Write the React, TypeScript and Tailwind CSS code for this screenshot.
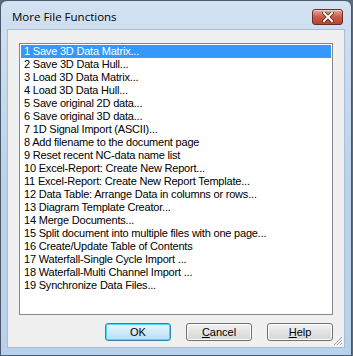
import React from 'react';

const items = [
  '1 Save 3D Data Matrix...',
  '2 Save 3D Data Hull...',
  '3 Load 3D Data Matrix...',
  '4 Load 3D Data Hull...',
  '5 Save original 2D data...',
  '6 Save original 3D data...',
  '7 1D Signal Import (ASCII)...',
  '8 Add filename to the document page',
  '9 Reset recent NC-data name list',
  '10 Excel-Report: Create New Report...',
  '11 Excel-Report: Create New Report Template...',
  '12 Data Table: Arrange Data in columns or rows...',
  '13 Diagram Template Creator...',
  '14 Merge Documents...',
  '15 Split document into multiple files with one page...',
  '16 Create/Update Table of Contents',
  '17 Waterfall-Single Cycle Import ...',
  '18 Waterfall-Multi Channel Import ...',
  '19 Synchronize Data Files...',
];

function CloseButton() {
  return (
    <div className="w-[31px] h-[16px] rounded-[3px] border border-[#6d2a26] bg-gradient-to-b from-[#e4a79b] via-[#c85a4a] to-[#b8442f] flex items-center justify-center shadow-[inset_0_1px_0_rgba(255,255,255,0.5)]">
      <svg width="12" height="10" viewBox="0 0 12 10">
        <path d="M2 1 L10 9 M10 1 L2 9" stroke="#4a2320" strokeWidth="3.6" strokeLinecap="square" />
        <path d="M2 1 L10 9 M10 1 L2 9" stroke="#ffffff" strokeWidth="2" strokeLinecap="square" />
      </svg>
    </div>
  );
}

function DlgButton({ children, primary }: { children: React.ReactNode; primary?: boolean }) {
  return (
    <button
      className={`w-[66px] h-[18px] rounded-[3px] border text-[11px] leading-none text-black flex items-center justify-center font-['Liberation_Sans',Arial,sans-serif] ${
        primary
          ? 'border-[#3c7fb1] bg-gradient-to-b from-[#eaf6fd] to-[#b6defa] shadow-[inset_0_0_0_1px_#48d8fb]'
          : 'border-[#707070] bg-gradient-to-b from-[#f2f2f2] to-[#d5d5d5] shadow-[inset_0_0_0_1px_#fcfcfc]'
      }`}
    >
      {children}
    </button>
  );
}

export default function App() {
  return (
    <div className="w-[353px] h-[356px] bg-[#5b6b7a] overflow-hidden">
      <div className="w-[352px] h-[356px] rounded-t-[7px] border border-[#4b5a6b] bg-gradient-to-b from-[#d3e1f1] via-[#bcd2ea] to-[#b9d1ea] flex flex-col px-[6px] pb-[7px]">
        <div className="h-[28px] flex items-start justify-between">
          <span className="pl-[5px] pt-[7px] text-[11.5px] text-black font-['Open_Sans','Noto_Sans',sans-serif]">
            More File Functions
          </span>
          <div className="pt-[8px] pr-[2px]">
            <CloseButton />
          </div>
        </div>
        <div className="flex-1 bg-[#f0f0f0] border border-[#a9bdd4] flex flex-col px-[11px] pt-[13px] relative">
          <div className="h-[272px] bg-white border border-[#828790] p-[1px] text-[11px] leading-[13px] text-black font-['Liberation_Sans',Arial,sans-serif]">
            {items.map((t, i) => (
              <div
                key={i}
                className={`h-[13px] pl-[3px] whitespace-nowrap tracking-[-0.2px] ${i === 0 ? 'bg-[#3399ff] text-white' : ''}`}
              >
                {t}
              </div>
            ))}
          </div>
          <div className="flex justify-end gap-[15px] mt-[8px]">
            <DlgButton primary>OK</DlgButton>
            <DlgButton>
              <span className="underline underline-offset-1">C</span>ancel
            </DlgButton>
            <DlgButton>
              <span className="underline underline-offset-1">H</span>elp
            </DlgButton>
          </div>
          <svg className="absolute right-[1px] bottom-[1px]" width="11" height="11" viewBox="0 0 11 11">
            <path d="M10 2 L2 10 M10 5 L5 10 M10 8 L8 10" stroke="#a0a0a0" strokeWidth="1" />
            <path d="M11 3 L3 11 M11 6 L6 11 M11 9 L9 11" stroke="#ffffff" strokeWidth="1" />
          </svg>
        </div>
      </div>
    </div>
  );
}
